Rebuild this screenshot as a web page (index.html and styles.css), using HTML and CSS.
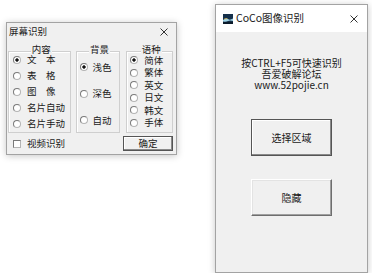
FILE: index.html
```html
<!DOCTYPE html>
<html lang="zh-CN">
<head>
    <meta charset="UTF-8">
    <title>CoCo图像识别</title>
    <link rel="stylesheet" href="styles.css">
</head>
<body>
    <div class="desk">
        <!-- 屏幕识别 设置窗口 -->
        <div class="win win-small">
            <div class="titlebar tb-small">
                <span class="title">屏幕识别</span>
                <svg class="close" viewBox="0 0 8 8"><path d="M0.5 0.5 L7.5 7.5 M7.5 0.5 L0.5 7.5"/></svg>
            </div>
            <div class="dlg">
                <div class="groups">
                    <div class="grp grp-content">
                        <span class="grp-title">内容</span>
                        <div class="opts">
                            <div class="opt"><span class="radio on"></span>文　本</div>
                            <div class="opt"><span class="radio"></span>表　格</div>
                            <div class="opt"><span class="radio"></span>图　像</div>
                            <div class="opt"><span class="radio"></span>名片自动</div>
                            <div class="opt"><span class="radio"></span>名片手动</div>
                        </div>
                    </div>
                    <div class="grp grp-bg">
                        <span class="grp-title">背景</span>
                        <div class="opts">
                            <div class="opt"><span class="radio on"></span>浅色</div>
                            <div class="opt"><span class="radio"></span>深色</div>
                            <div class="opt"><span class="radio"></span>自动</div>
                        </div>
                    </div>
                    <div class="grp grp-lang">
                        <span class="grp-title">语种</span>
                        <div class="opts">
                            <div class="opt"><span class="radio on"></span>简体</div>
                            <div class="opt"><span class="radio"></span>繁体</div>
                            <div class="opt"><span class="radio"></span>英文</div>
                            <div class="opt"><span class="radio"></span>日文</div>
                            <div class="opt"><span class="radio"></span>韩文</div>
                            <div class="opt"><span class="radio"></span>手体</div>
                        </div>
                    </div>
                </div>
                <div class="footer">
                    <div class="chk-row"><span class="check"></span>视频识别</div>
                    <div class="btn btn-default btn-ok">确定</div>
                </div>
            </div>
        </div>

        <!-- 主窗口 -->
        <div class="win win-main">
            <div class="titlebar tb-main">
                <div class="tb-left">
                    <svg class="app-icon" viewBox="0 0 10 10">
                        <rect width="10" height="10" fill="#15304a"/>
                        <path d="M0 6 Q3 3.5 5 5 T10 4.5 V7 Q7 6 5 7 T0 7.5 Z" fill="#9fd3e6"/>
                        <path d="M1 5.2 Q3 4 4.5 4.8" stroke="#e8c35a" stroke-width="0.8" fill="none"/>
                        <rect y="8" width="10" height="2" fill="#0b1b2b"/>
                    </svg>
                    <span class="title">CoCo图像识别</span>
                </div>
                <svg class="close" viewBox="0 0 8 8"><path d="M0.5 0.5 L7.5 7.5 M7.5 0.5 L0.5 7.5"/></svg>
            </div>
            <div class="main-body">
                <p class="hint">按CTRL+F5可快速识别<br>吾爱破解论坛<br>www.52pojie.cn</p>
                <div class="btn btn-default btn-big">选择区域</div>
                <div class="btn btn-big">隐藏</div>
            </div>
        </div>
    </div>
</body>
</html>
```

FILE: styles.css
```css
body {
    margin: 0;
    background-color: #fff;
    font-family: "Noto Sans CJK SC", "Liberation Sans", sans-serif;
    color: #1a1a1a;
}
.desk {
    display: flex;
    align-items: flex-start;
    padding: 4px 0 0 6px;
}
.win {
    box-sizing: border-box;
    background-color: #f0f0f0;
    border: 1px solid #a3a3a3;
    box-shadow: 0 1px 7px rgba(0, 0, 0, 0.22);
}
.win-small {
    width: 171px;
    height: 133px;
    margin-top: 18px;
}
.win-main {
    width: 153px;
    height: 269px;
    margin-left: 38px;
}
.titlebar {
    display: flex;
    align-items: center;
    justify-content: space-between;
}
.tb-small {
    height: 18px;
    padding: 0 8px 0 2px;
    font-size: 9.5px;
}
.tb-main {
    height: 27px;
    padding: 0 9px 0 7px;
    background-color: #fff;
    font-size: 10.5px;
}
.title {
    line-height: 1;
}
.tb-left {
    display: flex;
    align-items: center;
    gap: 3px;
}
.app-icon {
    width: 10px;
    height: 10px;
}
.close {
    width: 8px;
    height: 8px;
    stroke: #333;
    stroke-width: 1;
    fill: none;
}

/* 屏幕识别 */
.dlg {
    padding: 10px 3px 0 1px;
}
.groups {
    display: flex;
    gap: 5px;
}
.grp {
    box-sizing: border-box;
    height: 82px;
    border: 1px solid #cfcfcf;
    box-shadow: inset 1px 1px #fff;
    padding-left: 3px;
}
.grp-content {
    width: 63px;
    padding-left: 4px;
}
.grp-bg {
    width: 45px;
}
.grp-lang {
    width: 47px;
    margin-left: 1px;
}
.grp-title {
    display: block;
    width: fit-content;
    height: 11px;
    line-height: 11px;
    margin: -8px auto -3px;
    padding: 0 1px;
    background-color: #f0f0f0;
    font-size: 9.5px;
}
.opt {
    display: flex;
    align-items: center;
    gap: 6px;
    height: 16px;
    font-size: 9.5px;
    line-height: 1;
    white-space: nowrap;
}
.grp-bg .opts {
    padding-top: 2px;
}
.grp-bg .opt {
    height: 26.5px;
    gap: 5px;
}
.grp-lang .opts {
    padding-top: 2px;
}
.grp-lang .opt {
    height: 12.5px;
}
.radio {
    box-sizing: border-box;
    flex: none;
    width: 8px;
    height: 8px;
    border-radius: 50%;
    border: 1px solid #b4b4b4;
    border-top-color: #7a7a7a;
    border-left-color: #7a7a7a;
    background-color: #fff;
}
.radio.on {
    background: radial-gradient(circle, #111 0 1.4px, #fff 1.9px);
}
.footer {
    display: flex;
    align-items: center;
    justify-content: space-between;
    margin-top: 3px;
}
.chk-row {
    display: flex;
    align-items: center;
    gap: 6px;
    padding-left: 5px;
    font-size: 9.5px;
    line-height: 1;
}
.check {
    box-sizing: border-box;
    width: 8px;
    height: 8px;
    border: 1px solid #7a7a7a;
    border-right-color: #b4b4b4;
    border-bottom-color: #b4b4b4;
    background-color: #fff;
}
.btn {
    box-sizing: border-box;
    display: flex;
    align-items: center;
    justify-content: center;
    background-color: #f0f0f0;
    border: 1px solid;
    border-color: #fff #6e6e6e #6e6e6e #fff;
    box-shadow: inset -1px -1px #a0a0a0, inset 1px 1px #e3e3e3;
    line-height: 1;
}
.btn-default {
    border-color: #555;
    box-shadow: inset -1px -1px #8a8a8a, inset 1px 1px #fff;
}
.btn-ok {
    width: 50px;
    height: 15px;
    font-size: 9.5px;
}

/* 主窗口 */
.main-body {
    display: flex;
    flex-direction: column;
    align-items: center;
}
.hint {
    margin: 25px 0 29px;
    font-size: 10px;
    line-height: 11px;
    text-align: center;
}
.btn-big {
    width: 81px;
    height: 37px;
    font-size: 10px;
    margin-bottom: 23px;
}
```
